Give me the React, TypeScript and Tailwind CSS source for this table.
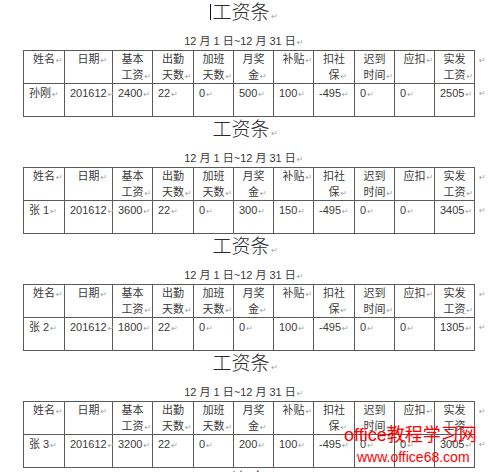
import React from 'react';

const font = { fontFamily: '"Liberation Sans", "Noto Sans CJK SC", sans-serif' };

const widths = ['w-[41px]', 'w-[48px]', 'w-[40px]', 'w-[41px]', 'w-[40px]', 'w-[40px]', 'w-[40px]', 'w-[41px]', 'w-[40px]', 'w-[40px]', 'w-[40px]'];

const headers: string[][] = [
  ['姓名'],
  ['日期'],
  ['基本', '工资'],
  ['出勤', '天数'],
  ['加班', '天数'],
  ['月奖', '金'],
  ['补贴'],
  ['扣社', '保'],
  ['迟到', '时间'],
  ['应扣'],
  ['实发', '工资'],
];

const rows: string[][] = [
  ['孙刚', '201612', '2400', '22', '0', '500', '100', '-495', '0', '0', '2505'],
  ['张 1', '201612', '3600', '22', '0', '300', '150', '-495', '0', '0', '3405'],
  ['张 2', '201612', '1800', '22', '0', '0', '100', '-495', '0', '0', '1305'],
  ['张 3', '201612', '3200', '22', '0', '200', '100', '-495', '0', '0', '3005'],
  ['张 4', '201612', '3000', '22', '0', '200', '100', '-495', '0', '0', '2805'],
];

// Word style paragraph mark, takes no width
const Mark = () => (
  <span className="inline-block w-0 whitespace-nowrap">
    <span className="pl-[1px] text-[8px] text-[#a0a0a0]" style={{ fontFamily: '"DejaVu Sans", sans-serif' }}>
      ↵
    </span>
  </span>
);

const Slip: React.FC<{ data: string[]; cursor?: boolean }> = ({ data, cursor }) => (
  <div className="h-[117px]">
    <div className="w-[482px] pt-[1px] text-center text-[19px] font-light leading-[24px] text-[#2a2a2a]">
      {cursor && (
        <span className="relative inline-block w-0">
          <span className="absolute -left-[2px] top-[-15px] h-[16px] w-px bg-[#111]" />
        </span>
      )}
      工资条
      <Mark />
    </div>
    <div className="mt-[5px] w-[480px] text-center text-[11px] leading-[14px] text-[#3a3a3a]">
      12 月 1 日~12 月 31 日
      <Mark />
    </div>
    <div className="flex">
      <div className="ml-[23px] border-t border-l border-[#5a5a5a] text-[11px] leading-[16px] text-[#3a3a3a]">
        <div className="flex">
          {headers.map((lines, i) => (
            <div key={i} className={`${widths[i]} h-[33px] border-r border-b border-[#5a5a5a] px-[4px] text-center`}>
              {lines.map((l, j) => (
                <div key={j}>
                  {l}
                  {j === lines.length - 1 && <Mark />}
                </div>
              ))}
            </div>
          ))}
        </div>
        <div className="flex">
          {data.map((v, i) => (
            <div key={i} className={`${widths[i]} h-[33px] border-r border-b border-[#5a5a5a] pl-[5px] pt-[1px]`}>
              {v}
              <Mark />
            </div>
          ))}
        </div>
      </div>
      <div className="pl-[3px] text-[11px] leading-[16px]">
        <div className="h-[33px] pt-[1px]">
          <Mark />
        </div>
        <div className="h-[33px] pt-[1px]">
          <Mark />
        </div>
      </div>
    </div>
  </div>
);

export default function App() {
  return (
    <div className="relative h-[472px] w-[500px] overflow-hidden bg-white" style={font}>
      {rows.map((r, i) => (
        <Slip key={i} data={r} cursor={i === 0} />
      ))}
      <div className="absolute left-[344px] top-[426px] text-[18px] leading-[18px] text-[#ff0000]">office教程学习网</div>
      <div className="absolute left-[357px] top-[450px] text-[14px] leading-[14px] text-[#ff0000]">www.office68.com</div>
    </div>
  );
}
